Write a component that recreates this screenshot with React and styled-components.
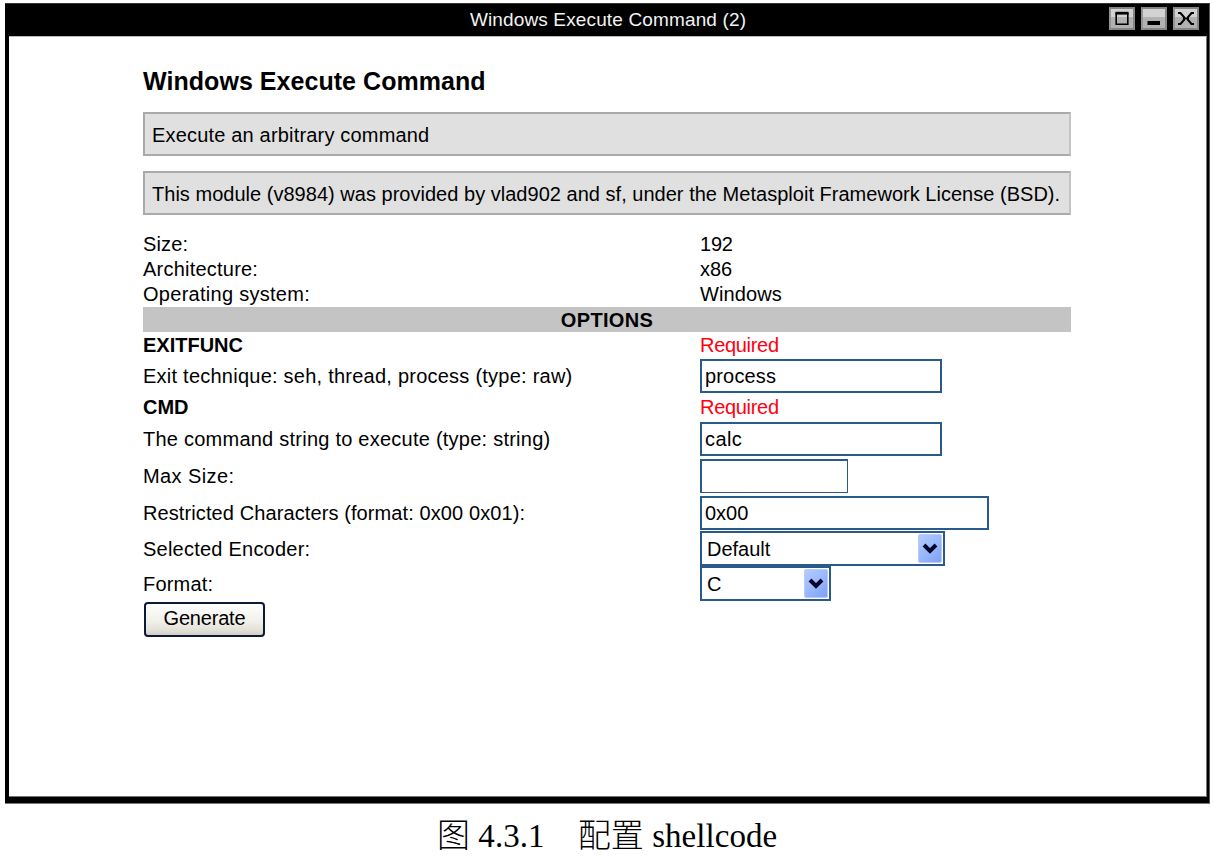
import React from "react";
import styled, { createGlobalStyle } from "styled-components";

const Global = createGlobalStyle`
  * { box-sizing: border-box; }
  body {
    margin: 0;
    background: #fff;
    color: #000;
    font-family: "Liberation Sans", Arial, sans-serif;
    font-size: 20px;
  }
`;

const Page = styled.div`
  width: 1213px;
  height: 856px;
  padding: 3px 3px 0 5px;
  overflow: hidden;
`;

const Window = styled.section`
  width: 1205px;
  height: 801px;
  display: flex;
  flex-direction: column;
  background: #000;
  border-top: 1px solid #333;
  border-right: 1px solid #555;
  border-bottom: 1px solid #7d7878;
  padding: 0 2px 6px 4px;
`;

const TitleBar = styled.header`
  height: 32px;
  flex: none;
  display: grid;
  grid-template-columns: 1fr auto 1fr;
  align-items: start;
`;

const Title = styled.div`
  grid-column: 2;
  color: #f2f2f2;
  font-size: 19px;
  line-height: 32px;
  letter-spacing: 0.14px;
`;

const Controls = styled.div`
  display: flex;
  gap: 6px;
  justify-content: flex-end;
  padding: 3px 8px 0 0;
`;

const Control = styled.button`
  width: 26px;
  height: 23px;
  padding: 0;
  border: 2px solid #858585;
  border-left-color: #949494;
  background: linear-gradient(#d2d2d2 0 42%, #b1b1b1 42%);
  svg { display: block; width: 22px; height: 19px; }
`;

const Body = styled.main`
  flex: 1;
  background: #fff;
  border-top: 1px solid #bbb;
  border-right: 1px solid #777;
  border-bottom: 1px solid #777;
  padding: 29px 135px 0 134px;
`;

const Heading = styled.h1`
  margin: 0 0 15px;
  height: 31px;
  font-size: 25px;
  line-height: 31px;
  font-weight: 700;
  letter-spacing: 0.05px;
`;

const Notice = styled.p`
  height: 44px;
  margin: 0 0 15px;
  padding-left: 7px;
  border: 2px solid #aaa;
  border-right-color: #c4c4c4;
  background: #e0e0e0;
  line-height: 42px;
  white-space: nowrap;
  letter-spacing: ${(p) => p.$spacing}px;
`;

const Form = styled.div`
  display: flex;
  flex-direction: column;
  padding-top: 1px;
`;

const Row = styled.div`
  height: ${(p) => p.$height}px;
  display: grid;
  grid-template-columns: 557px 1fr;
  align-items: center;
`;

const Label = styled.span`
  line-height: 24px;
  white-space: nowrap;
  font-weight: ${(p) => (p.$bold ? 700 : 400)};
  letter-spacing: ${(p) => p.$spacing || 0}px;
  color: ${(p) => (p.$required ? "#ff0010" : "inherit")};
`;

const Options = styled.h2`
  height: 25px;
  margin: 0;
  background: #c4c4c4;
  font-size: 20px;
  line-height: 26px;
  font-weight: 700;
  text-align: center;
  letter-spacing: 0.33px;
`;

const Input = styled.input`
  width: ${(p) => p.$width}px;
  height: 34px;
  padding: 1px 3px 0;
  border: 2px solid #2a5a8c;
  border-right-width: ${(p) => (p.$thin ? 1 : 2)}px;
  border-bottom-width: ${(p) => (p.$thin ? 1 : 2)}px;
  border-radius: 0;
  outline: 0;
  background: #fff;
  color: #000;
  font: inherit;
  letter-spacing: ${(p) => p.$spacing || 0}px;
`;

const Select = styled.div`
  width: ${(p) => p.$width}px;
  height: 35px;
  display: flex;
  align-items: center;
  justify-content: space-between;
  padding: 0 1px 0 5px;
  border: 2px solid #2a5a8c;
  background: #fff;
`;

const Arrow = styled.span`
  width: 24px;
  height: 29px;
  border-radius: 2px;
  border: 1px solid #b8cbfa;
  background: linear-gradient(135deg, #b4cbff, #9ab9fb 50%, #7f9ff5);
  svg { display: block; width: 22px; height: 27px; }
`;

const Button = styled.button`
  width: 121px;
  height: 35px;
  margin: 1px 0 0 1px;
  padding: 0 0 2px;
  border: 2px solid #0c1a38;
  border-radius: 4px;
  background: linear-gradient(#fff, #f1f0ea 55%, #e2e0d6 85%, #d3cfc4);
  color: #000;
  font: inherit;
  letter-spacing: -0.2px;
`;

const Caption = styled.p`
  margin: 13px 0 0 432px;
  font-family: "Liberation Serif", "Noto Sans CJK SC", serif;
  font-size: 33px;
  font-weight: 300;
  line-height: 38px;
  letter-spacing: 0.06px;
  white-space: pre;
`;

const Chevron = () => (
  <Arrow>
    <svg viewBox="0 0 22 27">
      <path d="M5 10 L11 16 L17 10" fill="none" stroke="#06062c" strokeWidth="4" />
    </svg>
  </Arrow>
);

export default function App() {
  return (
    <Page>
      <Global />
      <Window>
        <TitleBar>
          <Title>Windows Execute Command (2)</Title>
          <Controls>
            <Control aria-label="Maximize">
              <svg viewBox="0 0 22 19">
                <path d="M5.2 4 V15.2 H16.8 V4" fill="none" stroke="#000" strokeWidth="1.6" />
                <path d="M4.4 4.2 H17.6" stroke="#000" strokeWidth="2.8" />
              </svg>
            </Control>
            <Control aria-label="Minimize">
              <svg viewBox="0 0 22 19">
                <path d="M4.5 14 H17" stroke="#000" strokeWidth="4" />
              </svg>
            </Control>
            <Control aria-label="Close">
              <svg viewBox="0 0 22 19">
                <path d="M3 4 H5.5 L9 8.2 V10.8 L5.5 15 H3 M19 4 H16.5 L13 8.2 V10.8 L16.5 15 H19 M9 9.5 H13" fill="none" stroke="#000" strokeWidth="2.1" />
              </svg>
            </Control>
          </Controls>
        </TitleBar>
        <Body>
          <Heading>Windows Execute Command</Heading>
          <Notice $spacing={0.18}>Execute an arbitrary command</Notice>
          <Notice $spacing={0.022}>
            This module (v8984) was provided by vlad902 and sf, under the Metasploit Framework License (BSD).
          </Notice>
          <Form>
            <Row $height={25}>
              <Label $spacing={0.15}>Size:</Label>
              <Label $spacing={-0.2}>192</Label>
            </Row>
            <Row $height={25}>
              <Label $spacing={0.22}>Architecture:</Label>
              <Label>x86</Label>
            </Row>
            <Row $height={26}>
              <Label $spacing={0.28}>Operating system:</Label>
              <Label $spacing={0.1}>Windows</Label>
            </Row>
            <Options>OPTIONS</Options>
            <Row $height={26}>
              <Label $bold>EXITFUNC</Label>
              <Label $required $spacing={-0.3}>Required</Label>
            </Row>
            <Row $height={36}>
              <Label $spacing={0.24}>Exit technique: seh, thread, process (type: raw)</Label>
              <Input $width={242} $spacing={0.16} defaultValue="process" />
            </Row>
            <Row $height={26}>
              <Label $bold>CMD</Label>
              <Label $required $spacing={-0.3}>Required</Label>
            </Row>
            <Row $height={37}>
              <Label $spacing={0.24}>The command string to execute (type: string)</Label>
              <Input $width={242} $spacing={0.4} defaultValue="calc" />
            </Row>
            <Row $height={37}>
              <Label $spacing={0.4}>Max Size:</Label>
              <Input $width={148} $thin defaultValue="" />
            </Row>
            <Row $height={37}>
              <Label $spacing={0.1}>Restricted Characters (format: 0x00 0x01):</Label>
              <Input $width={289} defaultValue="0x00" />
            </Row>
            <Row $height={35}>
              <Label $spacing={0.23}>Selected Encoder:</Label>
              <Select $width={245}>
                <Label>Default</Label>
                <Chevron />
              </Select>
            </Row>
            <Row $height={35}>
              <Label $spacing={0.2}>Format:</Label>
              <Select $width={131}>
                <Label>C</Label>
                <Chevron />
              </Select>
            </Row>
          </Form>
          <Button>Generate</Button>
        </Body>
      </Window>
      <Caption>图 4.3.1　配置 shellcode</Caption>
    </Page>
  );
}
